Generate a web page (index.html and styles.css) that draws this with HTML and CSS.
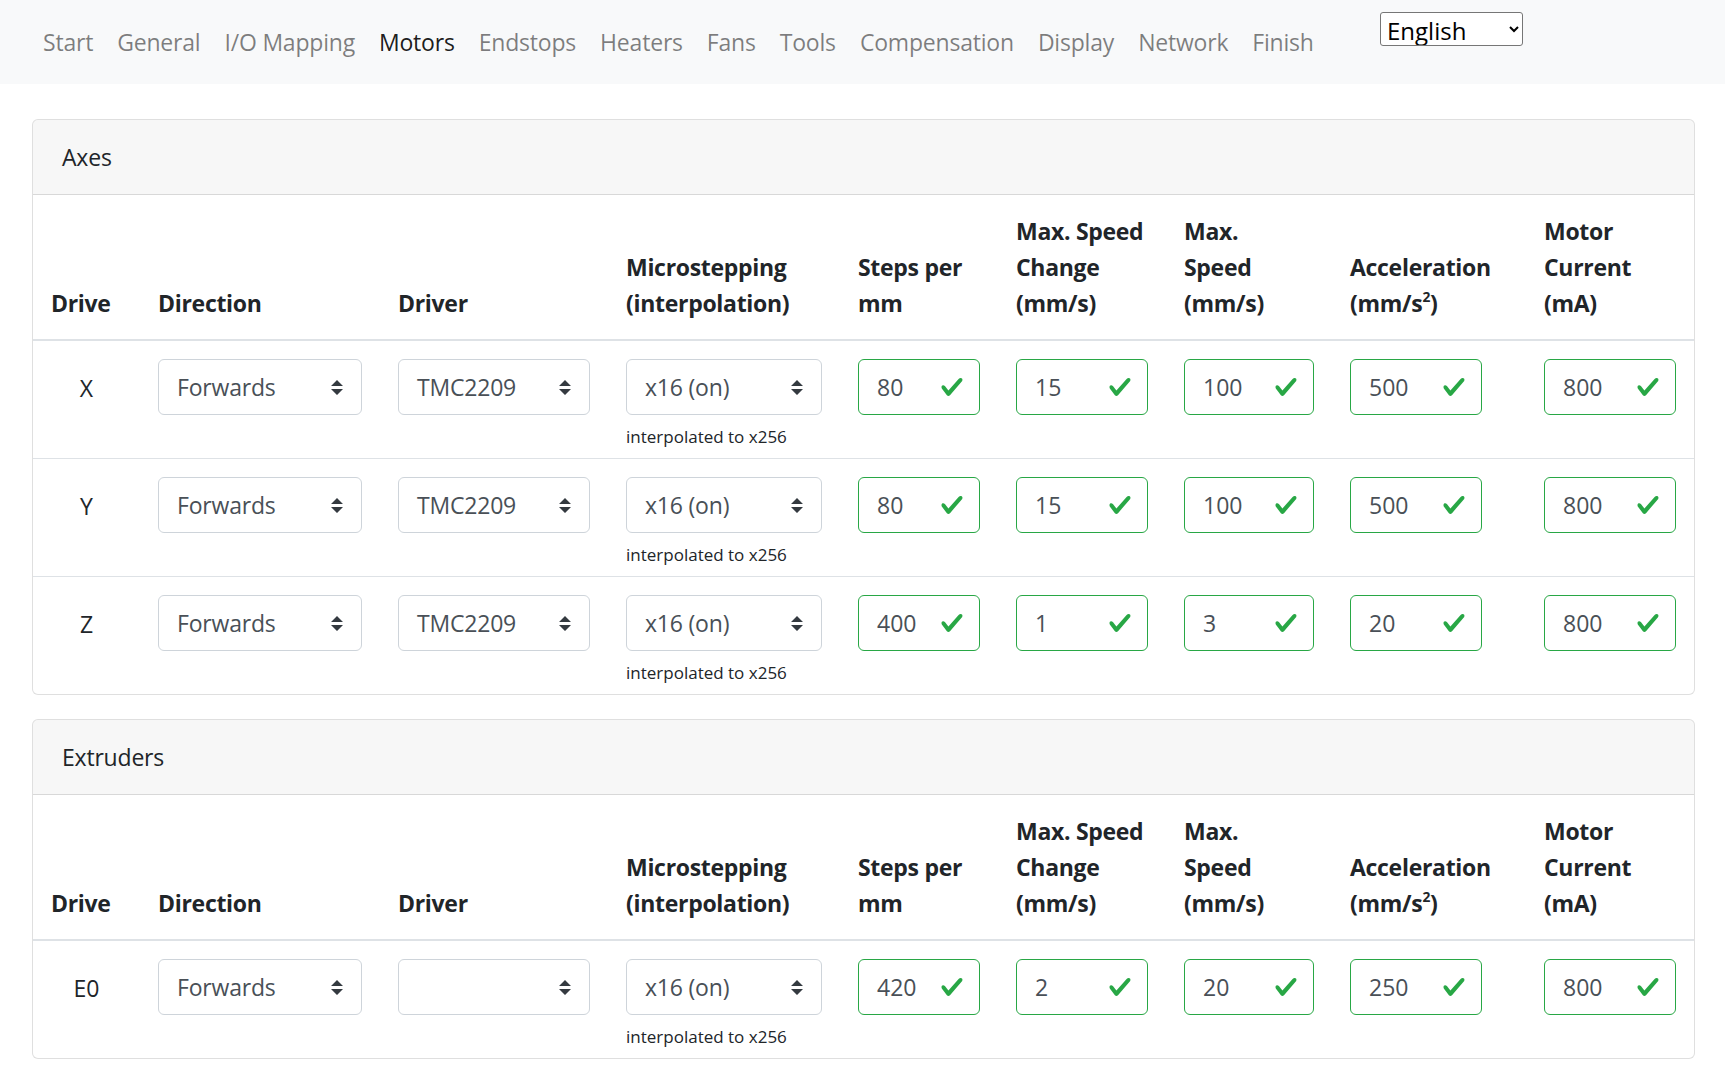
FILE: index.html
```html
<!DOCTYPE html>
<html lang="en">
<head>
<meta charset="utf-8">
<title>Motors</title>
<link rel="stylesheet" href="styles.css">
</head>
<body>
<nav class="navbar">
  <ul class="nav-links">
    <li class="nav-link">Start</li>
    <li class="nav-link">General</li>
    <li class="nav-link">I/O Mapping</li>
    <li class="nav-link active">Motors</li>
    <li class="nav-link">Endstops</li>
    <li class="nav-link">Heaters</li>
    <li class="nav-link">Fans</li>
    <li class="nav-link">Tools</li>
    <li class="nav-link">Compensation</li>
    <li class="nav-link">Display</li>
    <li class="nav-link">Network</li>
    <li class="nav-link">Finish</li>
  </ul>
  <select class="lang-select"><option>English</option></select>
</nav>

<main class="page">
  <section class="card">
    <div class="card-header">Axes</div>
    <table class="motors">
      <colgroup>
        <col class="c-drive"><col class="c-dir"><col class="c-driver"><col class="c-micro"><col class="c-steps"><col class="c-msc"><col class="c-ms"><col class="c-acc"><col class="c-cur">
      </colgroup>
      <thead>
        <tr>
          <th>Drive</th>
          <th>Direction</th>
          <th>Driver</th>
          <th>Microstepping<br>(interpolation)</th>
          <th>Steps per<br>mm</th>
          <th>Max. Speed<br>Change<br>(mm/s)</th>
          <th>Max.<br>Speed<br>(mm/s)</th>
          <th>Acceleration<br>(mm/s<sup>2</sup>)</th>
          <th>Motor<br>Current<br>(mA)</th>
        </tr>
      </thead>
      <tbody>
        <tr>
          <td class="drive"><span class="drive-label">X</span></td>
          <td><div class="sel">Forwards<svg class="arrows" viewBox="0 0 4 5"><path d="M2 0L0 2h4zm0 5L0 3h4z"/></svg></div></td>
          <td><div class="sel">TMC2209<svg class="arrows" viewBox="0 0 4 5"><path d="M2 0L0 2h4zm0 5L0 3h4z"/></svg></div></td>
          <td><div class="sel">x16 (on)<svg class="arrows" viewBox="0 0 4 5"><path d="M2 0L0 2h4zm0 5L0 3h4z"/></svg></div><div class="form-text">interpolated to x256</div></td>
          <td><div class="valid">80<svg class="check" viewBox="0 0 8 8"><path d="M2.3 6.73L.6 4.53c-.4-1.04.46-1.4 1.1-.8l1.1 1.4 3.4-3.8c.6-.63 1.6-.27 1.2.7l-4 4.6c-.43.5-.8.4-1.1.1z"/></svg></div></td>
          <td><div class="valid">15<svg class="check" viewBox="0 0 8 8"><path d="M2.3 6.73L.6 4.53c-.4-1.04.46-1.4 1.1-.8l1.1 1.4 3.4-3.8c.6-.63 1.6-.27 1.2.7l-4 4.6c-.43.5-.8.4-1.1.1z"/></svg></div></td>
          <td><div class="valid">100<svg class="check" viewBox="0 0 8 8"><path d="M2.3 6.73L.6 4.53c-.4-1.04.46-1.4 1.1-.8l1.1 1.4 3.4-3.8c.6-.63 1.6-.27 1.2.7l-4 4.6c-.43.5-.8.4-1.1.1z"/></svg></div></td>
          <td><div class="valid acc">500<svg class="check" viewBox="0 0 8 8"><path d="M2.3 6.73L.6 4.53c-.4-1.04.46-1.4 1.1-.8l1.1 1.4 3.4-3.8c.6-.63 1.6-.27 1.2.7l-4 4.6c-.43.5-.8.4-1.1.1z"/></svg></div></td>
          <td><div class="valid">800<svg class="check" viewBox="0 0 8 8"><path d="M2.3 6.73L.6 4.53c-.4-1.04.46-1.4 1.1-.8l1.1 1.4 3.4-3.8c.6-.63 1.6-.27 1.2.7l-4 4.6c-.43.5-.8.4-1.1.1z"/></svg></div></td>
        </tr>
        <tr>
          <td class="drive"><span class="drive-label">Y</span></td>
          <td><div class="sel">Forwards<svg class="arrows" viewBox="0 0 4 5"><path d="M2 0L0 2h4zm0 5L0 3h4z"/></svg></div></td>
          <td><div class="sel">TMC2209<svg class="arrows" viewBox="0 0 4 5"><path d="M2 0L0 2h4zm0 5L0 3h4z"/></svg></div></td>
          <td><div class="sel">x16 (on)<svg class="arrows" viewBox="0 0 4 5"><path d="M2 0L0 2h4zm0 5L0 3h4z"/></svg></div><div class="form-text">interpolated to x256</div></td>
          <td><div class="valid">80<svg class="check" viewBox="0 0 8 8"><path d="M2.3 6.73L.6 4.53c-.4-1.04.46-1.4 1.1-.8l1.1 1.4 3.4-3.8c.6-.63 1.6-.27 1.2.7l-4 4.6c-.43.5-.8.4-1.1.1z"/></svg></div></td>
          <td><div class="valid">15<svg class="check" viewBox="0 0 8 8"><path d="M2.3 6.73L.6 4.53c-.4-1.04.46-1.4 1.1-.8l1.1 1.4 3.4-3.8c.6-.63 1.6-.27 1.2.7l-4 4.6c-.43.5-.8.4-1.1.1z"/></svg></div></td>
          <td><div class="valid">100<svg class="check" viewBox="0 0 8 8"><path d="M2.3 6.73L.6 4.53c-.4-1.04.46-1.4 1.1-.8l1.1 1.4 3.4-3.8c.6-.63 1.6-.27 1.2.7l-4 4.6c-.43.5-.8.4-1.1.1z"/></svg></div></td>
          <td><div class="valid acc">500<svg class="check" viewBox="0 0 8 8"><path d="M2.3 6.73L.6 4.53c-.4-1.04.46-1.4 1.1-.8l1.1 1.4 3.4-3.8c.6-.63 1.6-.27 1.2.7l-4 4.6c-.43.5-.8.4-1.1.1z"/></svg></div></td>
          <td><div class="valid">800<svg class="check" viewBox="0 0 8 8"><path d="M2.3 6.73L.6 4.53c-.4-1.04.46-1.4 1.1-.8l1.1 1.4 3.4-3.8c.6-.63 1.6-.27 1.2.7l-4 4.6c-.43.5-.8.4-1.1.1z"/></svg></div></td>
        </tr>
        <tr>
          <td class="drive"><span class="drive-label">Z</span></td>
          <td><div class="sel">Forwards<svg class="arrows" viewBox="0 0 4 5"><path d="M2 0L0 2h4zm0 5L0 3h4z"/></svg></div></td>
          <td><div class="sel">TMC2209<svg class="arrows" viewBox="0 0 4 5"><path d="M2 0L0 2h4zm0 5L0 3h4z"/></svg></div></td>
          <td><div class="sel">x16 (on)<svg class="arrows" viewBox="0 0 4 5"><path d="M2 0L0 2h4zm0 5L0 3h4z"/></svg></div><div class="form-text">interpolated to x256</div></td>
          <td><div class="valid">400<svg class="check" viewBox="0 0 8 8"><path d="M2.3 6.73L.6 4.53c-.4-1.04.46-1.4 1.1-.8l1.1 1.4 3.4-3.8c.6-.63 1.6-.27 1.2.7l-4 4.6c-.43.5-.8.4-1.1.1z"/></svg></div></td>
          <td><div class="valid">1<svg class="check" viewBox="0 0 8 8"><path d="M2.3 6.73L.6 4.53c-.4-1.04.46-1.4 1.1-.8l1.1 1.4 3.4-3.8c.6-.63 1.6-.27 1.2.7l-4 4.6c-.43.5-.8.4-1.1.1z"/></svg></div></td>
          <td><div class="valid">3<svg class="check" viewBox="0 0 8 8"><path d="M2.3 6.73L.6 4.53c-.4-1.04.46-1.4 1.1-.8l1.1 1.4 3.4-3.8c.6-.63 1.6-.27 1.2.7l-4 4.6c-.43.5-.8.4-1.1.1z"/></svg></div></td>
          <td><div class="valid acc">20<svg class="check" viewBox="0 0 8 8"><path d="M2.3 6.73L.6 4.53c-.4-1.04.46-1.4 1.1-.8l1.1 1.4 3.4-3.8c.6-.63 1.6-.27 1.2.7l-4 4.6c-.43.5-.8.4-1.1.1z"/></svg></div></td>
          <td><div class="valid">800<svg class="check" viewBox="0 0 8 8"><path d="M2.3 6.73L.6 4.53c-.4-1.04.46-1.4 1.1-.8l1.1 1.4 3.4-3.8c.6-.63 1.6-.27 1.2.7l-4 4.6c-.43.5-.8.4-1.1.1z"/></svg></div></td>
        </tr>
      </tbody>
    </table>
  </section>

  <section class="card">
    <div class="card-header">Extruders</div>
    <table class="motors">
      <colgroup>
        <col class="c-drive"><col class="c-dir"><col class="c-driver"><col class="c-micro"><col class="c-steps"><col class="c-msc"><col class="c-ms"><col class="c-acc"><col class="c-cur">
      </colgroup>
      <thead>
        <tr>
          <th>Drive</th>
          <th>Direction</th>
          <th>Driver</th>
          <th>Microstepping<br>(interpolation)</th>
          <th>Steps per<br>mm</th>
          <th>Max. Speed<br>Change<br>(mm/s)</th>
          <th>Max.<br>Speed<br>(mm/s)</th>
          <th>Acceleration<br>(mm/s<sup>2</sup>)</th>
          <th>Motor<br>Current<br>(mA)</th>
        </tr>
      </thead>
      <tbody>
        <tr>
          <td class="drive"><span class="drive-label">E0</span></td>
          <td><div class="sel">Forwards<svg class="arrows" viewBox="0 0 4 5"><path d="M2 0L0 2h4zm0 5L0 3h4z"/></svg></div></td>
          <td><div class="sel"><svg class="arrows" viewBox="0 0 4 5"><path d="M2 0L0 2h4zm0 5L0 3h4z"/></svg></div></td>
          <td><div class="sel">x16 (on)<svg class="arrows" viewBox="0 0 4 5"><path d="M2 0L0 2h4zm0 5L0 3h4z"/></svg></div><div class="form-text">interpolated to x256</div></td>
          <td><div class="valid">420<svg class="check" viewBox="0 0 8 8"><path d="M2.3 6.73L.6 4.53c-.4-1.04.46-1.4 1.1-.8l1.1 1.4 3.4-3.8c.6-.63 1.6-.27 1.2.7l-4 4.6c-.43.5-.8.4-1.1.1z"/></svg></div></td>
          <td><div class="valid">2<svg class="check" viewBox="0 0 8 8"><path d="M2.3 6.73L.6 4.53c-.4-1.04.46-1.4 1.1-.8l1.1 1.4 3.4-3.8c.6-.63 1.6-.27 1.2.7l-4 4.6c-.43.5-.8.4-1.1.1z"/></svg></div></td>
          <td><div class="valid">20<svg class="check" viewBox="0 0 8 8"><path d="M2.3 6.73L.6 4.53c-.4-1.04.46-1.4 1.1-.8l1.1 1.4 3.4-3.8c.6-.63 1.6-.27 1.2.7l-4 4.6c-.43.5-.8.4-1.1.1z"/></svg></div></td>
          <td><div class="valid acc">250<svg class="check" viewBox="0 0 8 8"><path d="M2.3 6.73L.6 4.53c-.4-1.04.46-1.4 1.1-.8l1.1 1.4 3.4-3.8c.6-.63 1.6-.27 1.2.7l-4 4.6c-.43.5-.8.4-1.1.1z"/></svg></div></td>
          <td><div class="valid">800<svg class="check" viewBox="0 0 8 8"><path d="M2.3 6.73L.6 4.53c-.4-1.04.46-1.4 1.1-.8l1.1 1.4 3.4-3.8c.6-.63 1.6-.27 1.2.7l-4 4.6c-.43.5-.8.4-1.1.1z"/></svg></div></td>
        </tr>
      </tbody>
    </table>
  </section>
</main>
</body>
</html>
```

FILE: styles.css
```css
* { box-sizing: border-box; }

html, body {
  margin: 0;
  padding: 0;
  background: #fff;
}

body {
  font-family: "Open Sans", "Noto Sans", "DejaVu Sans", sans-serif;
  font-size: 23px;
  line-height: 36px;
  color: #212529;
}

/* ---------- navbar ---------- */
.navbar {
  display: flex;
  align-items: flex-start;
  height: 84px;
  padding: 12px 31px;
  background: #f8f9fa;
}

.nav-links {
  display: flex;
  list-style: none;
  margin: 0;
  padding: 0;
  width: 1349px;
}

.nav-link {
  padding: 12px 12px;
  color: rgba(0, 0, 0, 0.5);
  letter-spacing: -0.2px;
  white-space: nowrap;
}

.nav-link.active {
  color: rgba(0, 0, 0, 0.9);
}

.lang-select {
  width: 143px;
  height: 34px;
  font-family: "Open Sans", "Noto Sans", sans-serif;
  font-size: 24px;
  color: #000;
  background: #fff;
  border: 1px solid #767676;
  border-radius: 3px;
  padding: 0 2px;
}

/* ---------- page & cards ---------- */
.page {
  padding: 35px 30px 0 32px;
}

.card {
  border: 1px solid rgba(0, 0, 0, 0.125);
  border-radius: 6px;
  margin-bottom: 24px;
  overflow: hidden;
  background: #fff;
}

.card-header {
  padding: 19px 29px 19px;
  background: rgba(0, 0, 0, 0.03);
  border-bottom: 1px solid rgba(0, 0, 0, 0.125);
  letter-spacing: -0.2px;
}

/* ---------- table ---------- */
.motors {
  width: 100%;
  table-layout: fixed;
  border-collapse: collapse;
}

.c-drive { width: 107px; }
.c-dir { width: 240px; }
.c-driver { width: 228px; }
.c-micro { width: 232px; }
.c-steps { width: 158px; }
.c-msc { width: 168px; }
.c-ms { width: 166px; }
.c-acc { width: 194px; }
.c-cur { width: 168px; }

.motors th {
  padding: 18px 18px 18px;
  text-align: left;
  vertical-align: bottom;
  font-weight: 700;
  white-space: nowrap;
  letter-spacing: -0.3px;
  border-bottom: 2px solid #dee2e6;
}

.motors th sup {
  font-size: 60%;
  line-height: 0;
  position: relative;
  top: -0.1em;
  vertical-align: super;
}

.motors td {
  padding: 18px 18px 9px;
  vertical-align: top;
  border-top: 1px solid #dee2e6;
}

.motors tbody tr:first-child td {
  border-top: 0;
}

.motors td.drive {
  text-align: center;
}

.drive-label {
  display: block;
  padding-top: 11px;
}

/* custom select look */
.sel {
  display: flex;
  align-items: center;
  justify-content: space-between;
  height: 56px;
  padding: 0 18px;
  border: 1px solid #ced4da;
  border-radius: 6px;
  color: #495057;
  background: #fff;
  letter-spacing: -0.2px;
}

.arrows {
  width: 12px;
  height: 15px;
  margin-left: auto;
  fill: #343a40;
}

.form-text {
  margin-top: 10px;
  font-size: 17px;
  line-height: 24px;
  color: #212529;
  white-space: nowrap;
}

/* valid input look */
.valid {
  display: flex;
  align-items: center;
  justify-content: space-between;
  height: 56px;
  padding: 0 15px 0 18px;
  border: 1px solid #28a745;
  border-radius: 6px;
  color: #495057;
  background: #fff;
}

.valid.acc {
  width: 132px;
}

.check {
  width: 24px;
  height: 24px;
  fill: #28a745;
}
```
